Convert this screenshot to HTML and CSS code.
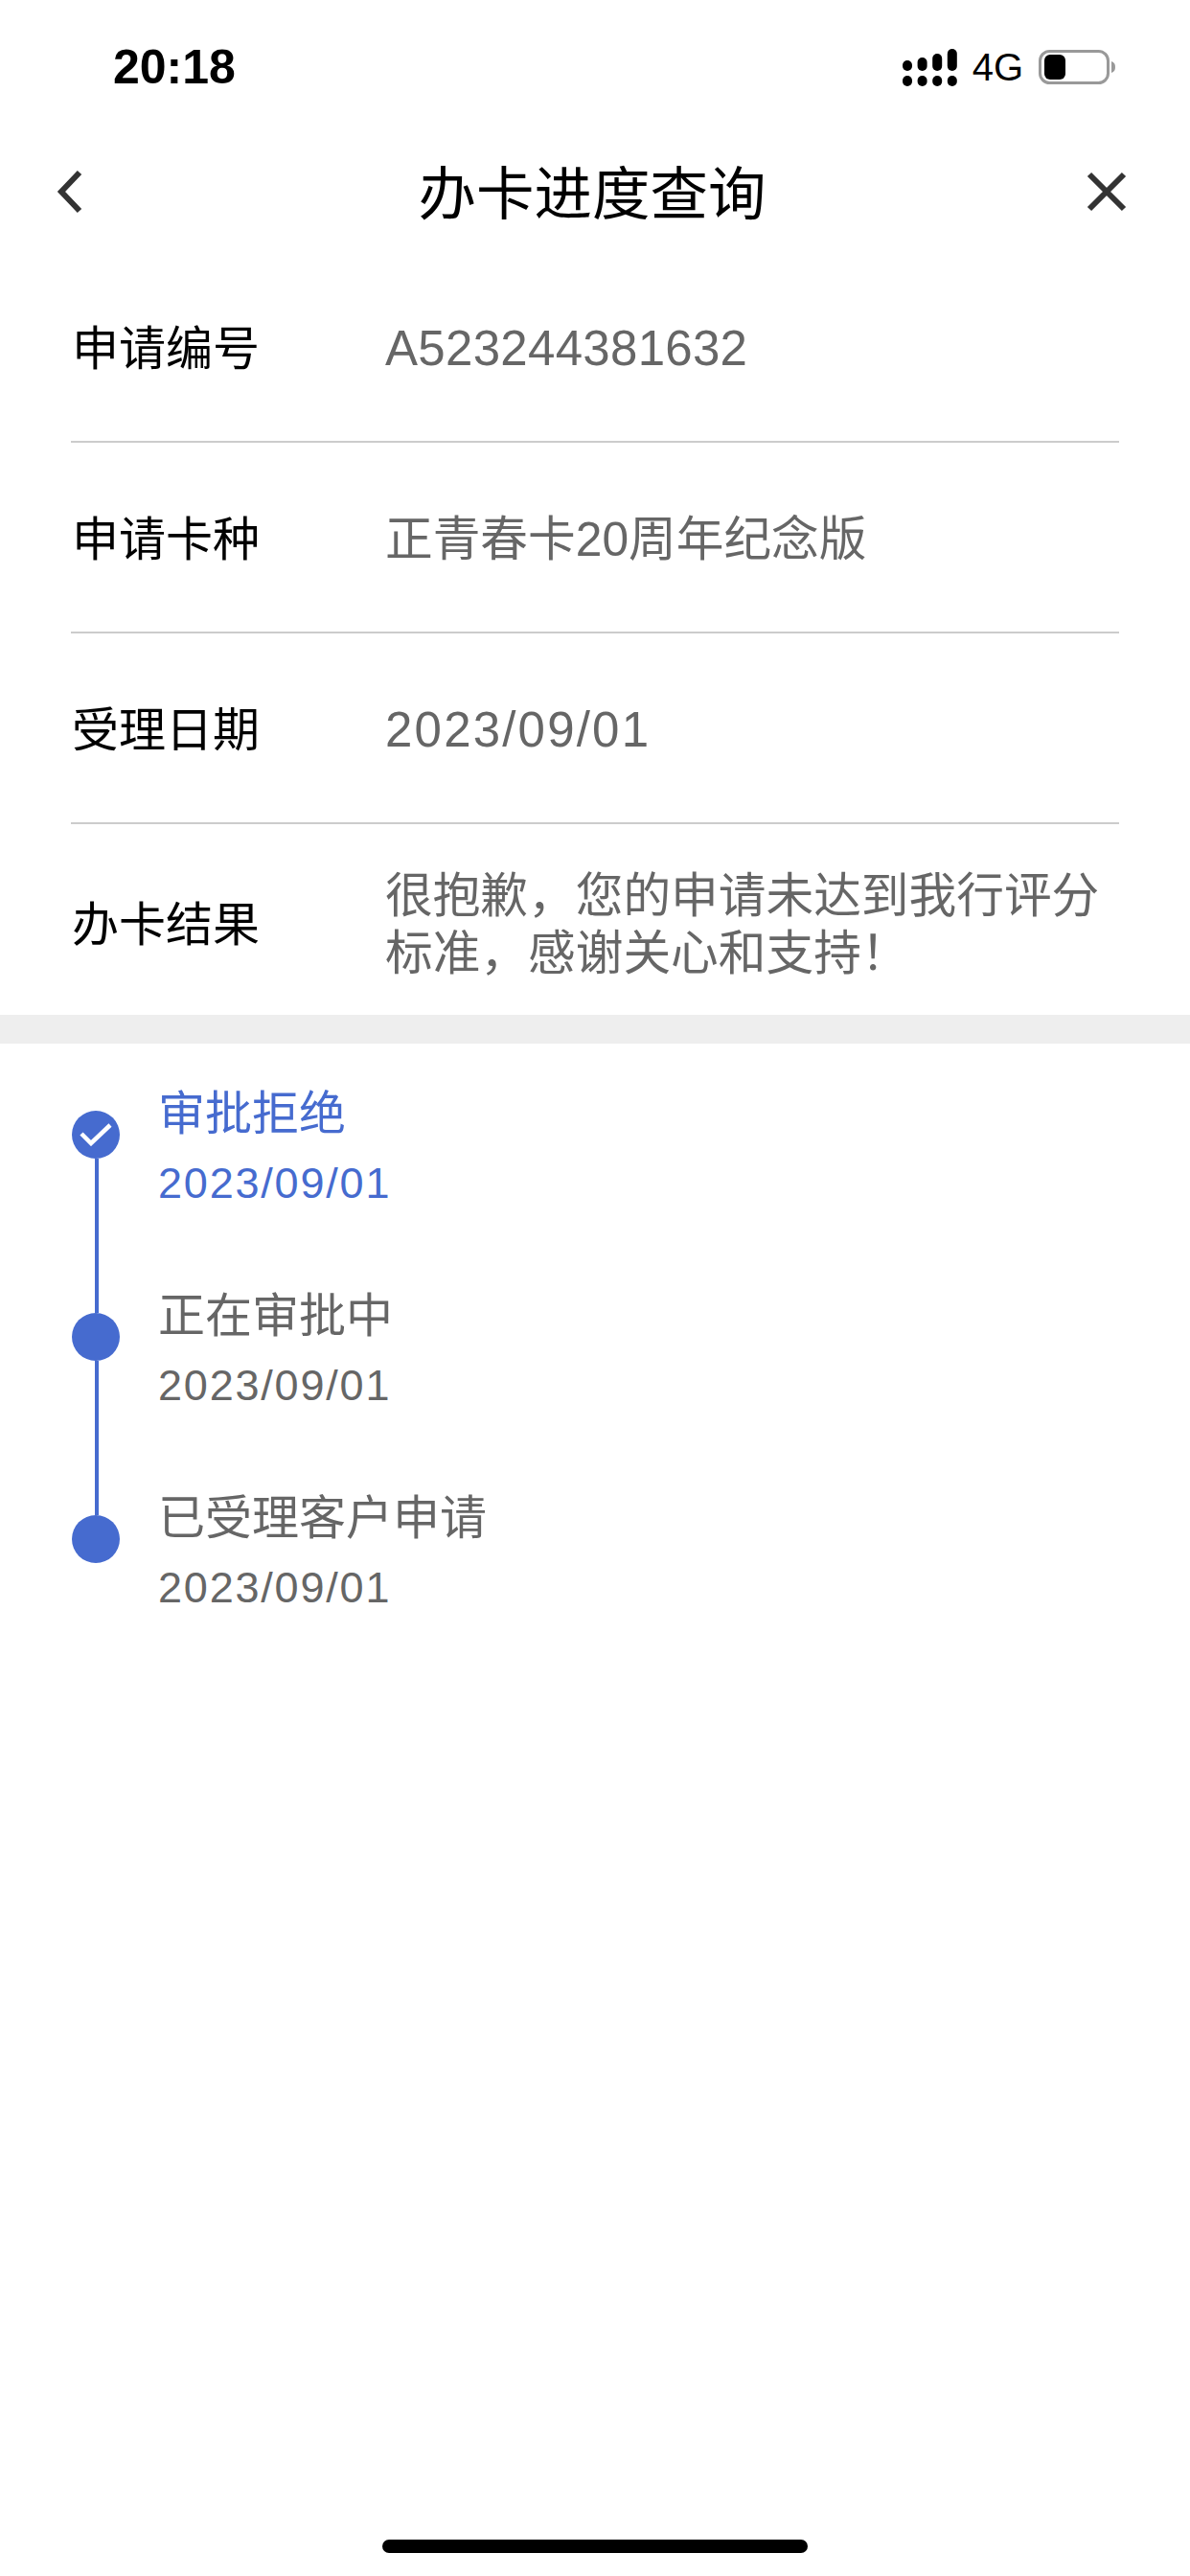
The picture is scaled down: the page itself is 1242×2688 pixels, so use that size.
FILE: index.html
```html
<!DOCTYPE html>
<html lang="zh-CN">

<head>
    <meta charset="UTF-8">
    <meta name="viewport" content="width=device-width, initial-scale=1.0">
    <title>办卡进度查询</title>
    <link rel="stylesheet" href="styles.css">
</head>

<body>
    <div class="page">
        <div class="status-bar">
            <span class="time">20:18</span>
            <div class="status-right">
                <svg class="signal" width="57" height="39" viewBox="0 0 57 39">
                    <rect x="0" y="12" width="10" height="11" rx="5" />
                    <rect x="15.6" y="9" width="10" height="14" rx="5" />
                    <rect x="31.2" y="5" width="10" height="18" rx="5" />
                    <rect x="46.8" y="0" width="10" height="23" rx="5" />
                    <rect x="0" y="28" width="10" height="11" rx="5" />
                    <rect x="15.6" y="28" width="10" height="11" rx="5" />
                    <rect x="31.2" y="28" width="10" height="11" rx="5" />
                    <rect x="46.8" y="28" width="10" height="11" rx="5" />
                </svg>
                <span class="network">4G</span>
                <svg class="battery" width="81" height="36" viewBox="0 0 81 36">
                    <rect x="1.5" y="1.5" width="71" height="33" rx="10" fill="#fff" stroke="#999" stroke-width="3" />
                    <rect x="6" y="5" width="22" height="26" rx="6" fill="#000" />
                    <path d="M76 12c3 1 4 3 4 6s-1 5-4 6z" fill="#999" />
                </svg>
            </div>
        </div>

        <div class="nav-bar">
            <svg class="nav-icon" width="46" height="50" viewBox="0 0 46 50">
                <path d="M25 5 6 25l19 20" fill="none" stroke="#333" stroke-width="6" />
            </svg>
            <h1>办卡进度查询</h1>
            <svg class="nav-icon" width="46" height="46" viewBox="0 0 46 46">
                <path d="M5 5l36 36M41 5 5 41" fill="none" stroke="#333" stroke-width="6" />
            </svg>
        </div>

        <div class="info-list">
            <div class="info-row">
                <span class="info-label">申请编号</span>
                <span class="info-value value-code">A523244381632</span>
            </div>
            <div class="info-row">
                <span class="info-label">申请卡种</span>
                <span class="info-value">正青春卡20周年纪念版</span>
            </div>
            <div class="info-row">
                <span class="info-label">受理日期</span>
                <span class="info-value value-date">2023/09/01</span>
            </div>
            <div class="info-row">
                <span class="info-label">办卡结果</span>
                <span class="info-value">很抱歉，您的申请未达到我行评分标准，感谢关心和支持！</span>
            </div>
        </div>

        <div class="band"></div>

        <ul class="steps">
            <li class="step step-active">
                <div class="rail">
                    <span class="dot">
                        <svg width="34" height="24" viewBox="0 0 34 24">
                            <path d="M2 11l10 10L32 2" fill="none" stroke="#fff" stroke-width="4.5" />
                        </svg>
                    </span>
                    <span class="line"></span>
                </div>
                <div class="step-text">
                    <div class="step-title">审批拒绝</div>
                    <div class="step-date">2023/09/01</div>
                </div>
            </li>
            <li class="step">
                <div class="rail">
                    <span class="dot"></span>
                    <span class="line"></span>
                </div>
                <div class="step-text">
                    <div class="step-title">正在审批中</div>
                    <div class="step-date">2023/09/01</div>
                </div>
            </li>
            <li class="step">
                <div class="rail">
                    <span class="dot"></span>
                </div>
                <div class="step-text">
                    <div class="step-title">已受理客户申请</div>
                    <div class="step-date">2023/09/01</div>
                </div>
            </li>
        </ul>

        <div class="home-bar"></div>
    </div>
</body>

</html>
```

FILE: styles.css
```css
body {
    margin: 0;
    padding: 0;
    background-color: #fff;
    font-family: "Liberation Sans", "Noto Sans CJK SC", sans-serif;
}

.page {
    position: relative;
    height: 2688px;
    overflow: hidden;
}

.status-bar {
    height: 140px;
    padding: 0 77px 0 118px;
    display: flex;
    align-items: center;
    justify-content: space-between;
    box-sizing: border-box;
}

.time {
    font-size: 50px;
    font-weight: bold;
    color: #000;
}

.status-right {
    display: flex;
    align-items: center;
    gap: 16px;
}

.network {
    font-size: 40px;
    color: #000;
}

.nav-bar {
    height: 120px;
    margin-bottom: 3px;
    padding: 0 64px 0 58px;
    display: flex;
    align-items: center;
    justify-content: space-between;
}

.nav-bar h1 {
    margin: 0;
    padding-bottom: 6px;
    font-size: 60.5px;
    font-weight: normal;
    color: #000;
}

.info-list {
    padding: 0 74px;
}

.info-row {
    height: 199px;
    padding-top: 4px;
    display: flex;
    align-items: center;
    border-bottom: 2px solid #ccc;
    box-sizing: border-box;
}

.info-row:last-child {
    padding-top: 10px;
    border-bottom: 0;
}

.info-label {
    width: 327px;
    margin-left: 1px;
    flex-shrink: 0;
    font-size: 49px;
    line-height: 60px;
    color: #000;
}

.info-value {
    font-size: 49.7px;
    line-height: 60px;
    color: #666;
}

.value-code {
    font-size: 51px;
    letter-spacing: 0.3px;
}

.value-date {
    font-size: 51px;
    letter-spacing: 2.2px;
}

.band {
    height: 30px;
    background-color: #eee;
}

.steps {
    list-style-type: none;
    margin: 0;
    padding: 40px 0 0 75px;
}

.step {
    display: flex;
    height: 211px;
}

.rail {
    width: 50px;
    margin-right: 40px;
    padding-top: 30px;
    display: flex;
    flex-direction: column;
}

.dot {
    width: 50px;
    height: 50px;
    flex-shrink: 0;
    border-radius: 50%;
    background-color: #466bcf;
    display: flex;
    align-items: center;
    justify-content: center;
}

.line {
    width: 4px;
    flex: 1;
    margin-left: 24px;
    margin-bottom: -30px;
    background-color: #466bcf;
}

.step-title {
    font-size: 49px;
    line-height: 66px;
    color: #666;
}

.step-date {
    margin-top: 12px;
    font-size: 45px;
    line-height: 56px;
    letter-spacing: 1.8px;
    color: #666;
}

.step-active .step-title,
.step-active .step-date {
    color: #466bcf;
}

.home-bar {
    position: absolute;
    left: 399px;
    top: 2650px;
    width: 444px;
    height: 14px;
    border-radius: 7px;
    background-color: #000;
}
```
